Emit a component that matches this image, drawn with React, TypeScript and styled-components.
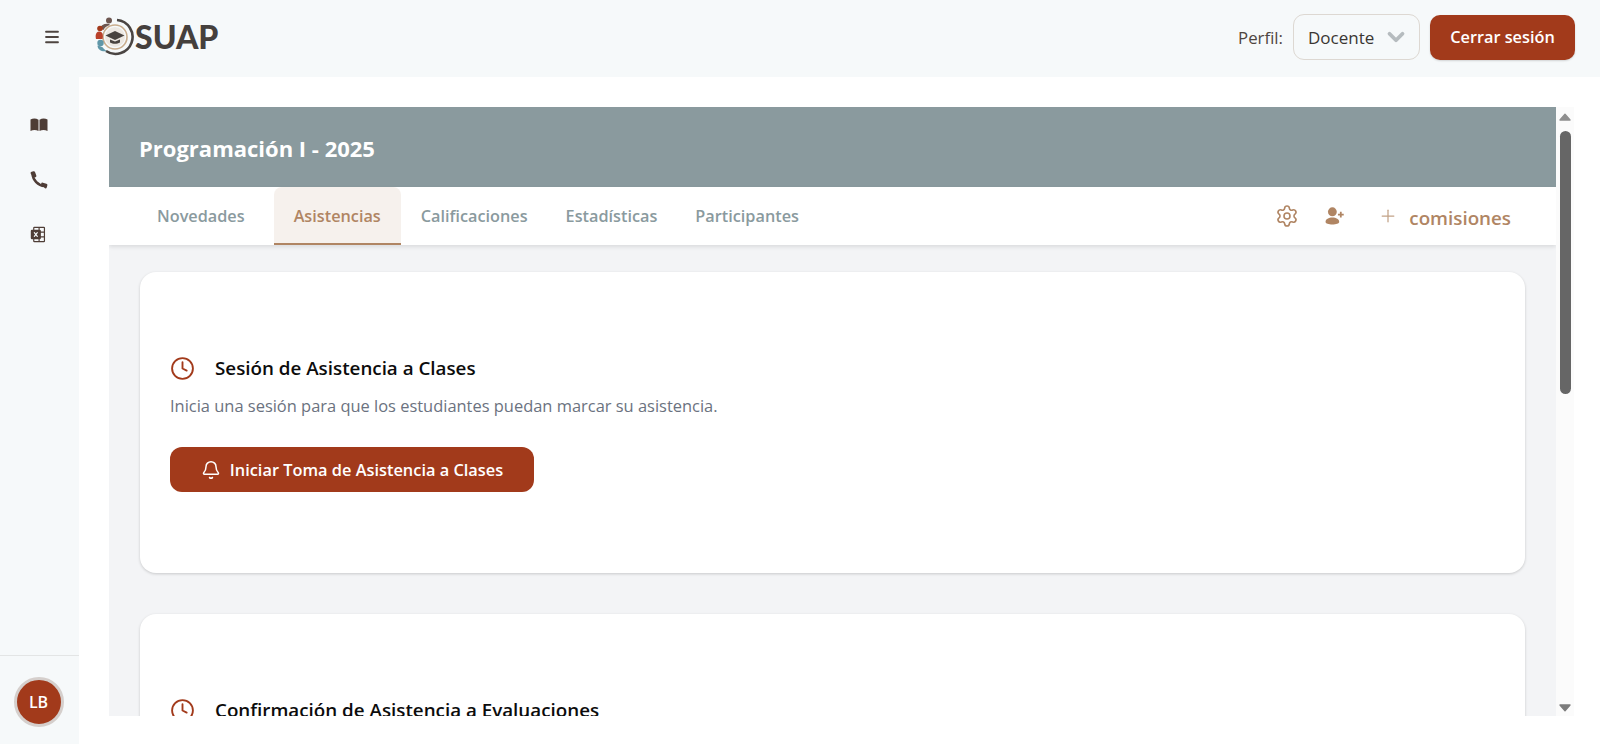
import React from "react";
import styled, { createGlobalStyle } from "styled-components";
import { Bell, ChevronDown, Clock, Menu, Plus, Settings } from "lucide-react";
import { PiMicrosoftExcelLogoFill } from "react-icons/pi";

const Global = createGlobalStyle`
  html, body { margin: 0; padding: 0; height: 100%; overflow: hidden; background: #ffffff; }
  * { box-sizing: border-box; }
  body { font-family: "Open Sans", "Noto Sans", sans-serif; }
`;

const Page = styled.div`
  width: 1600px; height: 744px; display: grid;
  grid-template-columns: 79px 1fr; grid-template-rows: 77px 1fr;
  background: #f6f9fa;
`;
const Header = styled.header`
  grid-column: 1 / 3; display: flex; align-items: center;
  padding: 0 25px 3px 43px;
`;
const MenuButton = styled.div`
  width: 18px; height: 18px; color: #4e4540; display: flex; margin-right: 32px;
`;
const Logo = styled.div`display: flex; align-items: center; height: 40px;`;
const LogoText = styled.span`
  font-family: "Lato", sans-serif; font-weight: 900; font-size: 32px;
  color: #45403d; margin-left: -2px; line-height: 1;
`;
const HeaderRight = styled.div`margin-left: auto; display: flex; align-items: center;`;
const ProfileLabel = styled.span`font-size: 16.800px; color: #4e4540; margin-right: 10px;`;
const Select = styled.div`
  width: 127px; height: 46px; border: 1px solid #ddd8d2; border-radius: 11px; background: #f6f9fa;
  display: flex; align-items: center; padding: 0 10px 0 14px; color: #3a3633; font-size: 17px;
  justify-content: space-between; margin-right: 10px;
`;
const LogoutButton = styled.div`
  width: 145px; height: 45px; border-radius: 10px; background: #a23a1b; color: #fff;
  display: flex; align-items: center; justify-content: center; font-size: 16.300px; font-weight: 600;
  box-shadow: 0 1px 2px rgba(0,0,0,.15);
`;
const Sidebar = styled.aside`display: flex; flex-direction: column; padding-top: 41px;`;
const NavIcon = styled.div<{ $h: number }>`
  height: ${(p) => p.$h}px; display: flex; justify-content: center; padding: 0 2px 0 0; color: #4e3d36;
  svg { display: block; }
`;
const SidebarFoot = styled.div`
  margin-top: auto; height: 89px; border-top: 1px solid #e3e5e5; display: flex; justify-content: center;
  padding: 21px 2px 0 0;
`;
const Avatar = styled.div`
  width: 50px; height: 50px; border-radius: 50%; background: #a23a1b; border: 3px solid #d5cfcc;
  color: #fff; font-size: 16px; font-weight: 600; display: flex; align-items: center; justify-content: center;
`;
const Main = styled.main`
  background: #fff; padding: 30px 26px 28px 30px; display: flex; min-height: 0;
`;
const Viewport = styled.div`flex: 1; min-width: 0; overflow: hidden; display: flex; flex-direction: column;`;
const Banner = styled.div`
  height: 80px; flex: none; background: #8a9a9e; color: #fff; font-size: 22px; font-weight: 700;
  display: flex; align-items: center; padding: 1px 0 0 30px;
`;
const TabBar = styled.nav`
  height: 58px; flex: none; display: flex; background: #fff; padding-left: 29px; position: relative;
  box-shadow: 0 2px 4px rgba(0,0,0,.1);
`;
const Tab = styled.div<{ $active?: boolean }>`
  padding: ${(p) => (p.$active ? "1px 20px 0" : "1px 19px 0")};
  margin: ${(p) => (p.$active ? "0 1px 0 10px" : "0")};
  display: flex; align-items: center; font-size: 16.250px; font-weight: 600;
  color: ${(p) => (p.$active ? "#b08563" : "#8a9a9e")};
  background: ${(p) => (p.$active ? "#f6f1ed" : "transparent")};
  border-bottom: 2px solid ${(p) => (p.$active ? "#b08563" : "transparent")};
  border-radius: 8px 8px 0 0;
`;
const TabTools = styled.div`
  margin-left: auto; display: flex; align-items: center; color: #b08563; padding-right: 45px;
`;
const ToolGear = styled.span`display: flex; margin-right: 26px;`;
const ToolUser = styled.span`display: flex; margin-right: 33px;`;
const ToolPlus = styled.span`display: flex; margin-right: 11px; color: #c2a287;`;
const ToolText = styled.span`font-size: 18.800px; font-weight: 600; position: relative; top: 2px;`;
const Content = styled.div`
  flex: 1; background: #f3f4f6; padding: 27px 31px 0; display: flex; flex-direction: column; gap: 41px; min-height: 0; overflow: hidden;
`;
const Card = styled.section`
  flex: none; height: 301px; background: #fff; border-radius: 16px; padding: 82px 30px 0;
  box-shadow: 0 1px 3px rgba(0,0,0,.18);
`;
const CardTitle = styled.h2`
  margin: 0; display: flex; align-items: center; font-size: 18.800px; font-weight: 600; color: #0c0c0c; height: 28px;
  svg { color: #a23a1b; margin-right: 20px; flex: none; }
`;
const CardText = styled.p`margin: 12px 0 0; font-size: 16.450px; line-height: 24px; color: #6b7280;`;
const PrimaryButton = styled.div`
  margin-top: 29px; width: 364px; height: 45px; border-radius: 12px; background: #a23a1b; color: #fff;
  display: flex; align-items: center; justify-content: center; gap: 9px; font-size: 16.370px; font-weight: 600;
`;
const Scrollbar = styled.div`
  width: 18px; flex: none; background: #fbfbfb; display: flex; flex-direction: column; align-items: center; padding: 6px 0 4px;
`;
const ArrowIcon = styled.svg<{ $down?: boolean }>`
  width: 12px; height: 8px; flex: none; color: ${(p) => (p.$down ? "#7d7d7d" : "#8f8f8f")};
  ${(p) => (p.$down ? "margin-top: auto; transform: rotate(180deg);" : "")}
`;
const Thumb = styled.div`width: 11px; height: 263px; margin-top: 10px; border-radius: 6px; background: #666;`;

const Arrow = ({ down }: { down?: boolean }) => (
  <ArrowIcon $down={down} viewBox="0 0 12 8">
    <path d="M6 1.200L11 7H1z" fill="currentColor" stroke="currentColor" strokeWidth="1.400" strokeLinejoin="round" />
  </ArrowIcon>
);

const LogoMark = () => (
  <svg width="44" height="40" viewBox="0 0 44 40">
    <path d="M24 3a17 17 0 1 1-11 31" fill="none" stroke="#4a4542" strokeWidth="2.600" />
    <circle cx="22" cy="20" r="12" fill="none" stroke="#c9ad8d" strokeWidth="1.600" />
    <circle cx="22" cy="20" r="10" fill="#ece8e2" />
    <path d="M12.500 18.500L22 14l9.500 4.500L22 23z" fill="#48433f" />
    <path d="M17 22.500v3c3 1.800 7 1.800 10 0v-3l-5 2z" fill="#48433f" />
    <circle cx="16" cy="3.500" r="3" fill="#6d5750" />
    <path d="M7 11c1-3 5-5 9-4l1 1c-3 1-5 2-6.500 5z" fill="#6d5750" />
    <circle cx="7" cy="11.500" r="2.800" fill="#a23a1b" />
    <path d="M3 22c-1-4 0-7 3-7.500 3.500 0 4.500 3 3.500 7.500z" fill="#b9412a" />
    <circle cx="7.500" cy="26" r="3.200" fill="#5f97a8" />
    <path d="M4.500 28.500c2 .5 6 1.500 6 3l3 2.500c-4 1-9-1-9-5.500z" fill="#5f97a8" />
  </svg>
);

const BookIcon = () => (
  <svg width="18" height="14" viewBox="0 0 18 14" fill="currentColor">
    <path d="M.500 1.500c2.500-1.200 5.500-1.200 8 .2V13c-2.500-1.200-5.500-1.200-8 0z" />
    <path d="M17.500 1.500c-2.500-1.200-5.500-1.200-8 .2V13c2.500-1.200 5.500-1.200 8 0z" />
  </svg>
);

const PhoneIcon = () => (
  <svg width="20" height="18" viewBox="0 0 20 18" fill="none" stroke="currentColor" strokeLinecap="round">
    <path d="M3.500 3C4 9 9 14.500 15.500 15" strokeWidth="2.600" />
    <path d="M3 2.200l1.800-.5L6 5" strokeWidth="2.800" strokeLinejoin="round" />
    <path d="M13.500 13l3.500 1-.6 2" strokeWidth="2.800" strokeLinejoin="round" />
  </svg>
);

const UserPlusIcon = () => (
  <svg width="20" height="18" viewBox="0 0 19 17" fill="currentColor">
    <circle cx="7" cy="4.500" r="4.200" />
    <path d="M.500 14.200C.500 11.500 3.500 10 7 10s6.500 1.500 6.500 4.200c0 1.600-3 2.300-6.500 2.300S.500 15.800.500 14.200z" />
    <path d="M15 4.500v5.500M12.300 7.200h5.500" fill="none" stroke="currentColor" strokeWidth="1.700" />
  </svg>
);

export default function App() {
  return (
    <Page>
      <Global />
      <Header>
        <MenuButton><Menu size={18} strokeWidth={2.400} /></MenuButton>
        <Logo><LogoMark /><LogoText>SUAP</LogoText></Logo>
        <HeaderRight>
          <ProfileLabel>Perfil:</ProfileLabel>
          <Select>Docente <ChevronDown size={26} strokeWidth={3.500} color="#b6bcbf" /></Select>
          <LogoutButton>Cerrar sesión</LogoutButton>
        </HeaderRight>
      </Header>
      <Sidebar>
        <NavIcon $h={53}><BookIcon /></NavIcon>
        <NavIcon $h={54}><PhoneIcon /></NavIcon>
        <NavIcon $h={55}><PiMicrosoftExcelLogoFill size={19} /></NavIcon>
        <SidebarFoot><Avatar>LB</Avatar></SidebarFoot>
      </Sidebar>
      <Main>
        <Viewport>
          <Banner>Programación I - 2025</Banner>
          <TabBar>
            <Tab>Novedades</Tab>
            <Tab $active>Asistencias</Tab>
            <Tab>Calificaciones</Tab>
            <Tab>Estadísticas</Tab>
            <Tab>Participantes</Tab>
            <TabTools>
              <ToolGear><Settings size={24} strokeWidth={1.600} /></ToolGear>
              <ToolUser><UserPlusIcon /></ToolUser>
              <ToolPlus><Plus size={20} strokeWidth={1.500} /></ToolPlus>
              <ToolText>comisiones</ToolText>
            </TabTools>
          </TabBar>
          <Content>
            <Card>
              <CardTitle><Clock size={25} strokeWidth={1.800} />Sesión de Asistencia a Clases</CardTitle>
              <CardText>Inicia una sesión para que los estudiantes puedan marcar su asistencia.</CardText>
              <PrimaryButton><Bell size={20} strokeWidth={1.800} />Iniciar Toma de Asistencia a Clases</PrimaryButton>
            </Card>
            <Card>
              <CardTitle><Clock size={25} strokeWidth={1.800} />Confirmación de Asistencia a Evaluaciones</CardTitle>
            </Card>
          </Content>
        </Viewport>
        <Scrollbar><Arrow /><Thumb /><Arrow down /></Scrollbar>
      </Main>
    </Page>
  );
}
